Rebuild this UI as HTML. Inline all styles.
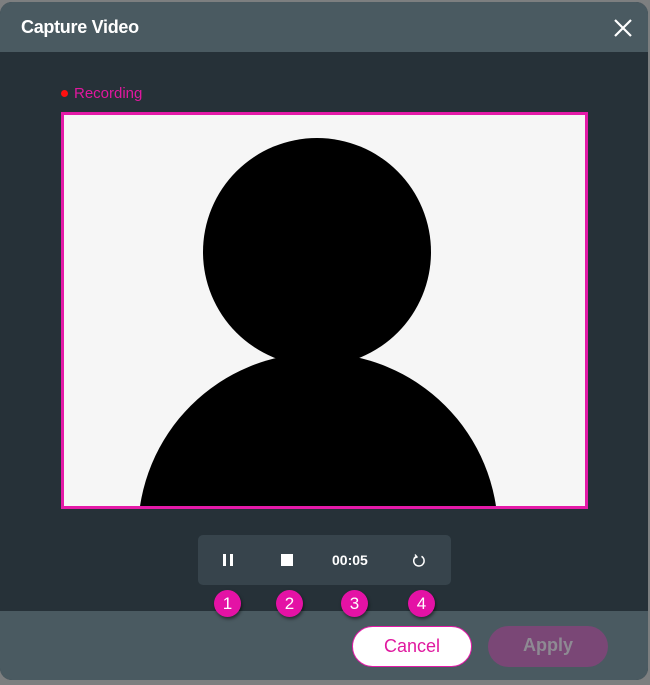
<!DOCTYPE html>
<html><head><meta charset="utf-8"><style>
*{margin:0;padding:0;box-sizing:border-box}
body{width:650px;height:685px;background:#7d7f80;position:relative;overflow:hidden;font-family:"Liberation Sans",sans-serif}
.dlg{position:absolute;left:0;top:2px;width:648px;height:678px;border-radius:12px;overflow:hidden;background:#263138}
.hdr{position:absolute;left:0;top:0;width:100%;height:50px;background:#4a5a61}
.hdr h1{position:absolute;left:21px;top:15px;color:#fff;font-size:18px;font-weight:bold;letter-spacing:-0.3px}
.ftr{position:absolute;left:0;top:609px;width:100%;height:69px;background:#4a5a61}
.rec{position:absolute;left:61px;top:83px;color:#e0189f;font-size:15px}
.rec i{display:inline-block;width:7px;height:7px;border-radius:50%;background:#ff1010;margin-right:6px;vertical-align:1px}
.vid{position:absolute;left:61px;top:110px;width:527px;height:397px;border:3px solid #e41aa8;background:#f6f6f6;overflow:hidden}
.bar{position:absolute;left:198px;top:533px;width:253px;height:50px;background:#37444c;border-radius:5px}
.badge{position:absolute;top:588px;width:27px;height:27px;border-radius:50%;background:#e412a5;color:#fff;font-size:17px;text-align:center;line-height:27px;box-shadow:1px 2px 3px rgba(0,0,0,.5);z-index:2}
.btn{position:absolute;top:624px;width:120px;height:41px;border-radius:21px;font-size:18px;text-align:center;line-height:39px}
</style></head><body>
<div class="dlg">
<div class="hdr"><h1>Capture Video</h1>
<svg style="position:absolute;left:614px;top:17px" width="18" height="18"><path d="M1 1L17 17M17 1L1 17" stroke="#fff" stroke-width="2.2"/></svg></div>
<div class="rec"><i></i>Recording</div>
<div class="vid">
<svg width="521" height="391" style="position:absolute;left:0;top:0">
<circle cx="253" cy="137" r="114" fill="#000"/>
<circle cx="254" cy="418" r="180" fill="#000"/>
</svg></div>
<div class="bar">
<div style="position:absolute;left:25px;top:19px;width:3px;height:12px;background:#fff"></div>
<div style="position:absolute;left:32px;top:19px;width:3px;height:12px;background:#fff"></div>
<div style="position:absolute;left:83px;top:19px;width:12px;height:12px;background:#fff"></div>
<div style="position:absolute;left:134px;top:17px;color:#fff;font-weight:bold;font-size:14px">00:05</div>
<svg style="position:absolute;left:214px;top:19px" width="14" height="14" viewBox="0 0 14 14"><path d="M9.5 2.3A5.2 5.2 0 1 1 4 2.5" fill="none" stroke="#fff" stroke-width="1.5"/><path d="M3 0.5L5 3L2 4.3" fill="none" stroke="#fff" stroke-width="1.4"/></svg>
</div>
<div class="ftr"></div>
<div class="badge" style="left:214px">1</div>
<div class="badge" style="left:276px">2</div>
<div class="badge" style="left:341px">3</div>
<div class="badge" style="left:408px">4</div>
<div class="btn" style="left:352px;background:#fff;border:1px solid #e41aa8;color:#e0189f">Cancel</div>
<div class="btn" style="left:488px;background:#7a4776;color:#8e8a93;font-weight:bold">Apply</div>
</div>
</body></html>
